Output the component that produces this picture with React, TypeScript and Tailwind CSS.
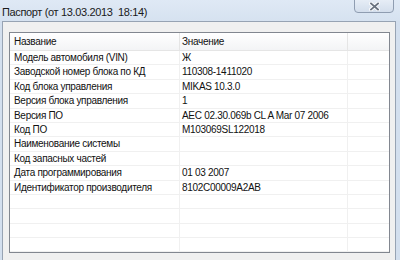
import React from 'react';

const rows: [string, string][] = [
  ['Модель автомобиля (VIN)', 'Ж'],
  ['Заводской номер блока по КД', '110308-1411020'],
  ['Код блока управления', 'MIKAS 10.3.0'],
  ['Версия блока управления', '1'],
  ['Версия ПО', 'AEC 02.30.069b CL A Mar 07 2006'],
  ['Код ПО', 'M103069SL122018'],
  ['Наименование системы', ''],
  ['Код запасных частей', ''],
  ['Дата программирования', '01 03 2007'],
  ['Идентификатор производителя', '8102C00009A2AB'],
  ['', ''],
  ['', ''],
  ['', ''],
  ['', ''],
];

const CloseButton: React.FC = () => (
  <div className="w-[40px] h-[14px] mt-[-1px] rounded-b-[4px] border border-[#8f9db1] bg-gradient-to-b from-[#e6edf6] to-[#d3deec] flex items-center justify-center">
    <svg width="11" height="9" viewBox="0 0 11 9">
      <path d="M2 1.5 L9 7.5 M9 1.5 L2 7.5" stroke="#ffffff" strokeWidth="3.6" strokeLinecap="square" />
      <path d="M2 1.5 L9 7.5 M9 1.5 L2 7.5" stroke="#6a7380" strokeWidth="1.8" strokeLinecap="square" />
    </svg>
  </div>
);

const App: React.FC = () => {
  return (
    <div className="w-[400px] h-[260px] overflow-hidden bg-[#d3dfee] flex flex-col font-['Liberation_Sans',Arial,sans-serif] text-[10px] tracking-[-0.3px] text-[#111]">
      <div className="h-[21px] shrink-0 flex items-start justify-between pl-[2px] pr-[6px] bg-gradient-to-b from-[#dfe9f5] to-[#d6e2f0]">
        <span className="text-[11px] tracking-[-0.35px] leading-[24px] text-[#1a1a1a]">Паспорт (от 13.03.2013&nbsp;&nbsp;18:14)</span>
        <CloseButton />
      </div>
      <div className="flex-1 ml-[2px] mr-[4px] border-l border-t border-r border-[#97a3b3] bg-[#f0f0f0] pl-[6px] pr-[5px] pt-[10px]">
        <div className="border border-[#828790] bg-white">
          <div className="grid grid-cols-[170px_168px_1fr] h-[18px] border-b border-[#e5e5e5] bg-gradient-to-b from-white to-[#f3f4f6]">
            <div className="border-r border-[#e5e5e5] pl-[4px] leading-[18px]">Название</div>
            <div className="border-r border-[#e5e5e5] pl-[2px] leading-[18px]">Значение</div>
            <div />
          </div>
          {rows.map(([name, value], i) => (
            <div key={i} className="grid grid-cols-[170px_168px_1fr] h-[14.4px] border-b border-[#f0f0f0]">
              <div className="border-r border-[#f0f0f0] pl-[4px] leading-[13px] whitespace-nowrap overflow-hidden">{name}</div>
              <div className="border-r border-[#f0f0f0] pl-[2px] leading-[13px] whitespace-nowrap overflow-hidden">{value}</div>
              <div />
            </div>
          ))}
        </div>
      </div>
    </div>
  );
};

export default App;
